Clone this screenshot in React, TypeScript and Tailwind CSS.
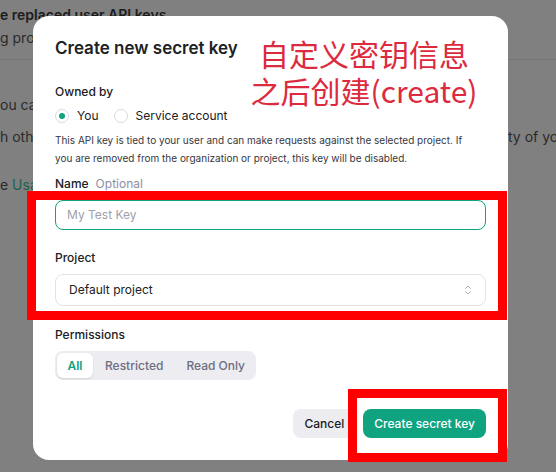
import React from "react";
import { ChevronsUpDown } from "lucide-react";

export default function App() {
  return (
    <div className="relative w-[556px] h-[472px] overflow-hidden bg-[#808080] font-['Inter',sans-serif]">
      {/* dimmed page behind the dialog */}
      <div className="flex flex-col text-[14px] leading-[20px] text-[#2a2a2a] whitespace-nowrap">
        <div className="pt-[5px] font-semibold text-[#1c1c1c]">e replaced user API keys</div>
        <div className="mt-[3px]">g projects</div>
        <div className="mt-[11px] border-t border-[#747474]" />
        <div className="mt-[35px]">ou can</div>
        <div className="mt-[12px] flex">
          <span className="w-[508px] shrink-0 overflow-hidden">h others</span>
          <span>ty of you</span>
        </div>
        <div className="mt-[28px]">
          e <span className="text-[#22604f]">Usage</span>
        </div>
      </div>

      {/* dialog */}
      <div className="absolute left-[33px] top-[16px] w-[475px] h-[444px] rounded-[16px] bg-white px-[22px] pt-[20px] pb-[22px] flex flex-col text-[#202123]">
        <div className="text-[17px] leading-[24px] font-semibold">Create new secret key</div>

        <div className="mt-[22px] text-[12px] leading-[20px] font-medium">Owned by</div>
        <div className="mt-[4px] h-[20px] flex items-center text-[12px]">
          <span className="w-[14px] h-[14px] rounded-full border border-[#d9d9e3] flex items-center justify-center">
            <span className="w-[6px] h-[6px] rounded-full bg-[#10a37f]" />
          </span>
          <span className="ml-[8px]">You</span>
          <span className="ml-[15px] w-[14px] h-[14px] rounded-full border border-[#d9d9e3]" />
          <span className="ml-[8px]">Service account</span>
        </div>

        <div className="mt-[5px] text-[10px] leading-[18px] text-[#353740] whitespace-nowrap">
          This API key is tied to your user and can make requests against the selected project. If
          <br />
          you are removed from the organization or project, this key will be disabled.
        </div>

        <div className="mt-[7px] flex items-center text-[12px] leading-[20px]">
          <span className="font-medium">Name</span>
          <span className="ml-[7px] text-[#8e8ea0]">Optional</span>
        </div>
        <div className="mt-[6px] h-[30px] rounded-[8px] border-[1.5px] border-[#10a37f] px-[11px] flex items-center text-[12px] text-[#a0a0aa]">
          My Test Key
        </div>

        <div className="mt-[18px] text-[12px] leading-[20px] font-medium">Project</div>
        <div className="mt-[6px] h-[32px] rounded-[8px] border border-[#e3e3e6] pl-[13px] pr-[11px] flex items-center justify-between text-[12px]">
          <span>Default project</span>
          <ChevronsUpDown size={12} strokeWidth={1.6} color="#9a9aa6" />
        </div>

        <div className="mt-[19px] text-[12px] leading-[20px] font-medium">Permissions</div>
        <div className="mt-[6px] h-[29px] w-[201px] rounded-[8px] bg-[#ececf1] p-[2px] flex text-[12px] font-medium whitespace-nowrap">
          <span className="w-[36px] shrink-0 rounded-[6px] bg-white shadow-[0_1px_2px_rgba(0,0,0,0.12)] flex items-center justify-center text-[#10a37f] font-semibold">
            All
          </span>
          <span className="px-[12px] flex items-center text-[#6e6e80]">Restricted</span>
          <span className="px-[11px] flex items-center text-[#6e6e80]">Read Only</span>
        </div>

        <div className="mt-auto flex justify-end gap-[8px] text-[12px] font-medium">
          <button className="h-[29px] px-[11px] rounded-[8px] bg-[#ececf1] text-[#202123]">Cancel</button>
          <button className="h-[29px] px-[11px] rounded-[8px] bg-[#10a37f] text-white">Create secret key</button>
        </div>
      </div>

      {/* annotations */}
      <div className="absolute left-[240px] top-[35px] w-[248px] text-center text-[30px] leading-[37px] text-[#dc2a3e] font-['Noto_Sans_CJK_SC','Noto_Sans',sans-serif]">
        <div>自定义密钥信息</div>
        <div>之后创建(create)</div>
      </div>
      <div className="absolute left-[27px] top-[191px] w-[480px] h-[129px] border-[9px] border-[#ff0000]" />
      <div className="absolute left-[348px] top-[389px] w-[159px] h-[73px] border-[9px] border-[#ff0000]" />
    </div>
  );
}
